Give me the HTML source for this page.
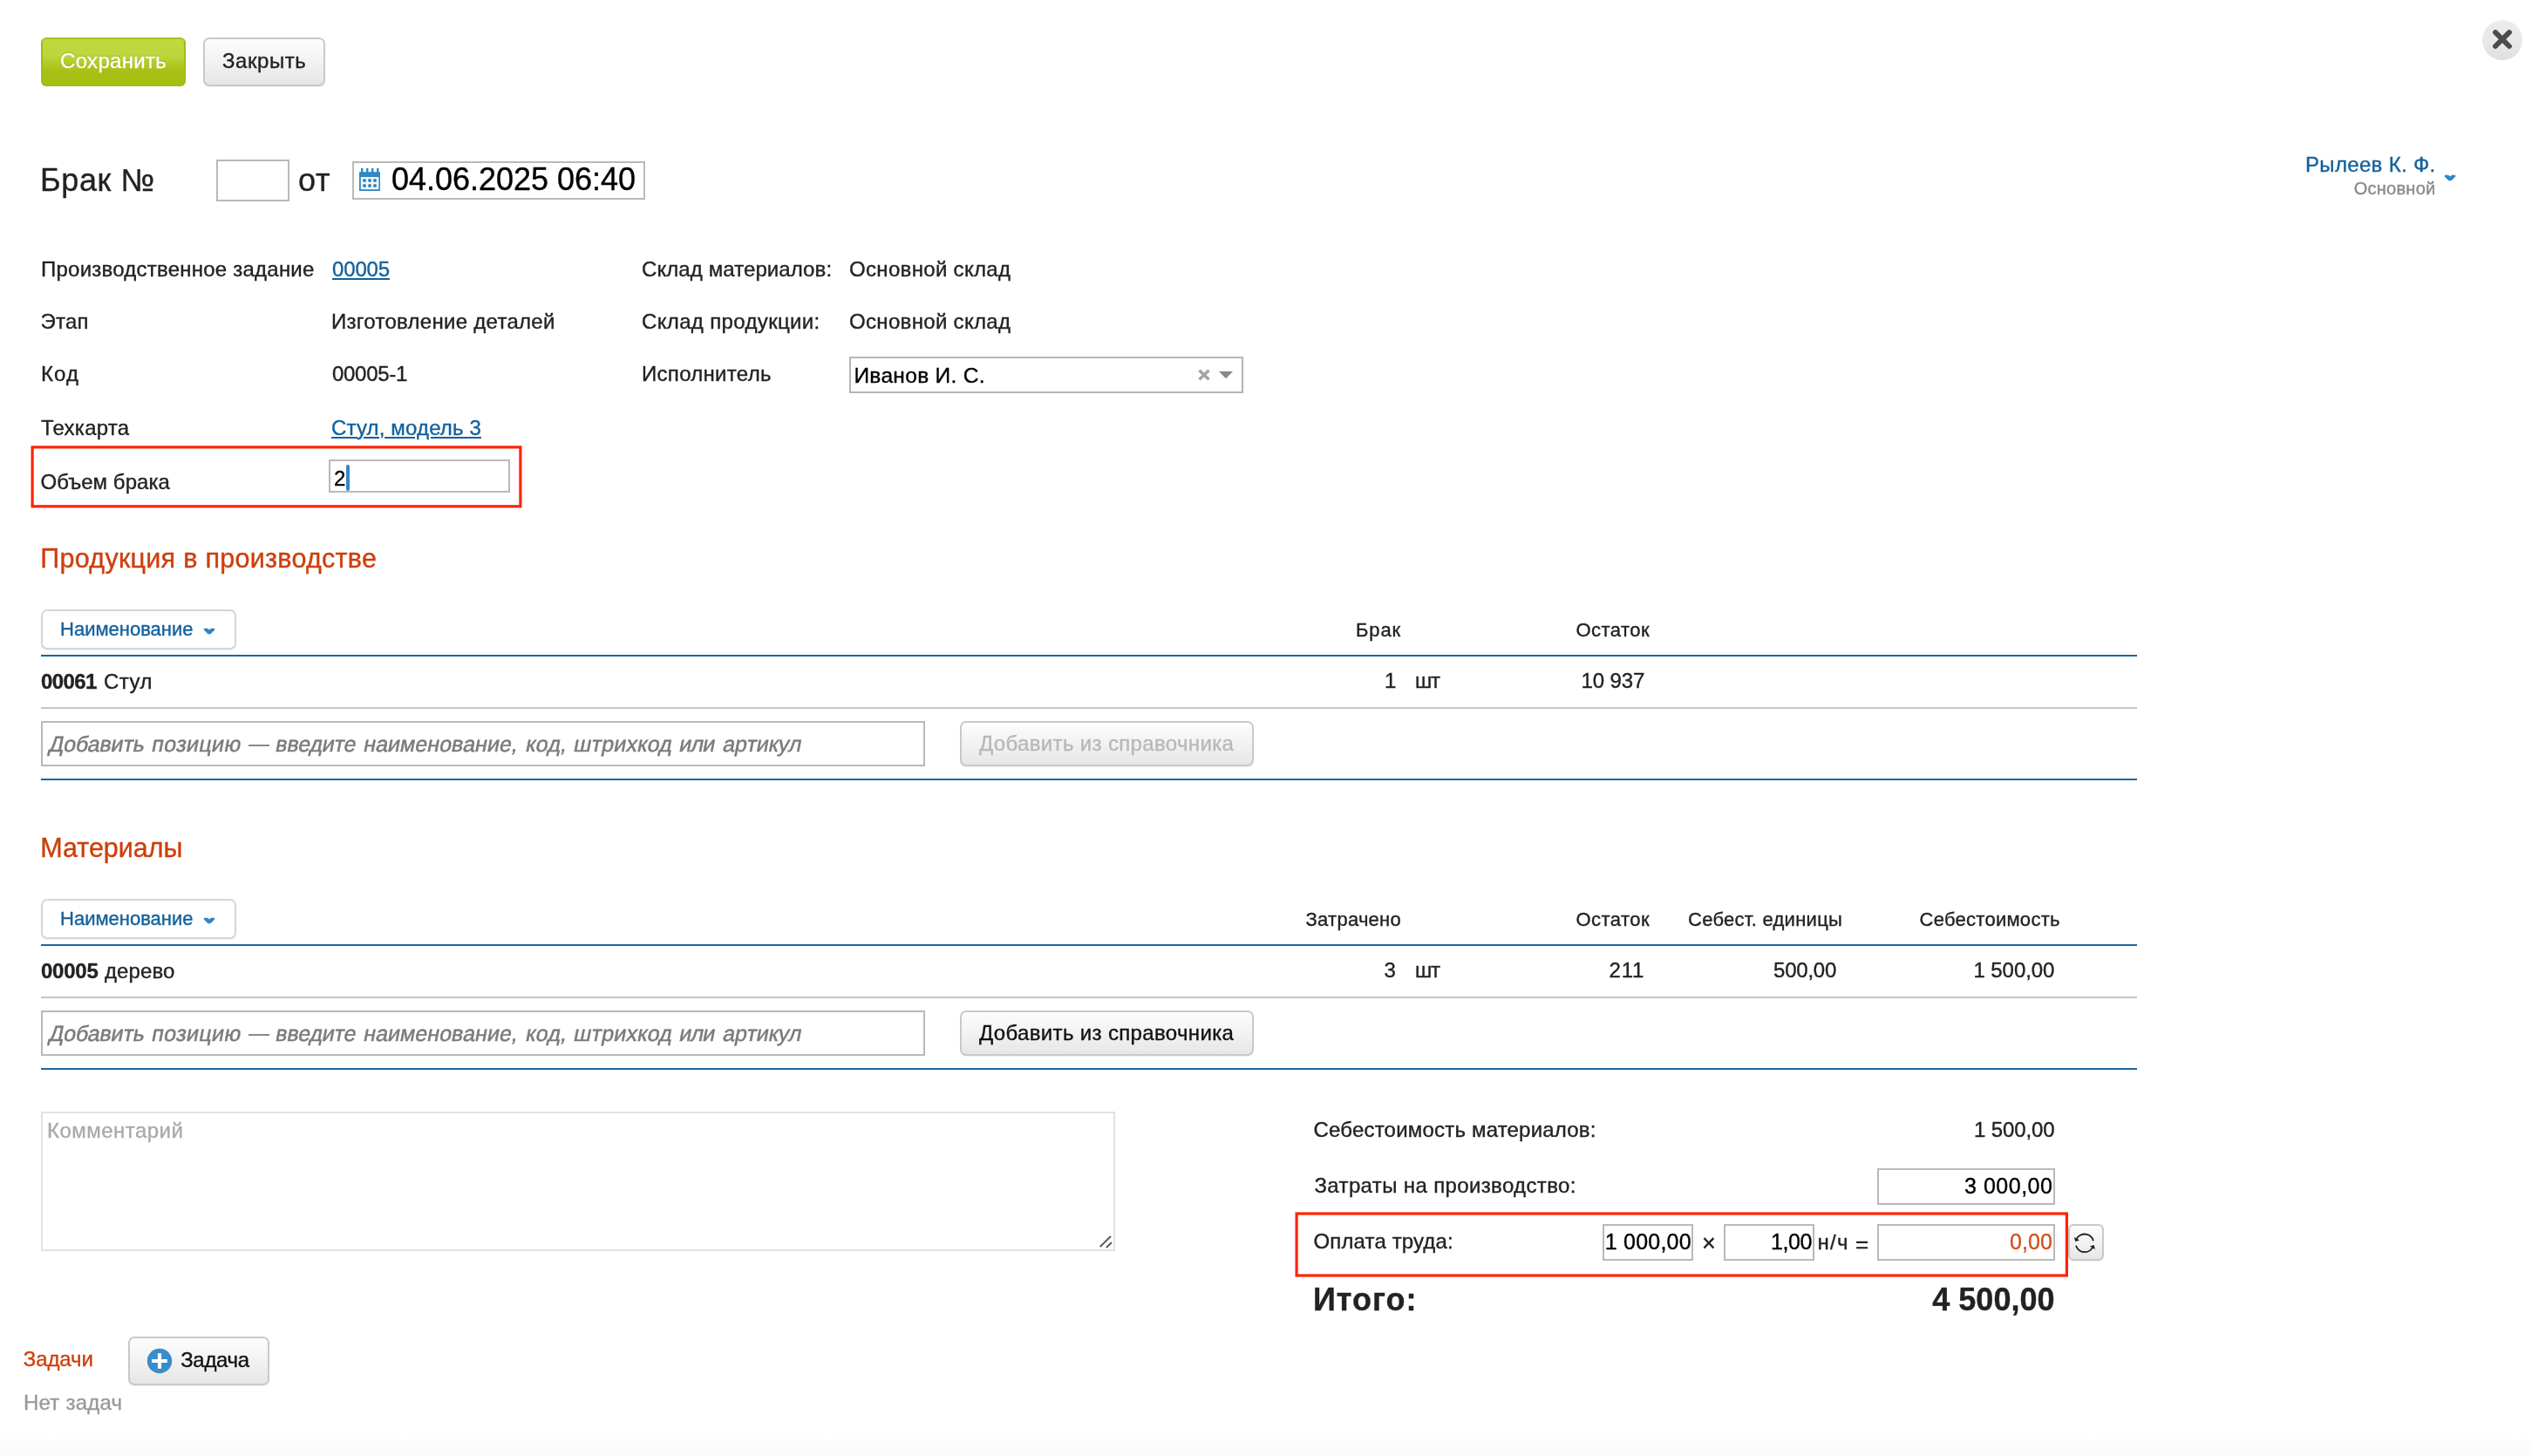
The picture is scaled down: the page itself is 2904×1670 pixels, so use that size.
<!DOCTYPE html>
<html lang="ru"><head><meta charset="utf-8"><title>Брак</title>
<style>
html,body{margin:0;padding:0;background:#fff;}
body{width:2904px;height:1670px;position:relative;overflow:hidden;font-family:"Liberation Sans",sans-serif;}
.t{position:absolute;white-space:nowrap;line-height:1;font-family:"Liberation Sans",sans-serif;-webkit-text-stroke:0.36px currentColor;}
#w{position:absolute;left:0;top:0;width:2904px;height:1670px;will-change:transform;}
.b{position:absolute;box-sizing:border-box;}
.foot{position:absolute;left:0;top:1646px;width:2904px;height:24px;background:linear-gradient(#fff,#fafafa);}
</style></head><body>
<div class="foot"></div>
<div id="w">
<div class="b" style="left:47px;top:43px;width:166px;height:56px;border-radius:6px;border:2px solid #a3bb12;border-top-color:#a9c31c;background:linear-gradient(#c0d840 0%,#bfd73f 33%,#b3cb29 52%,#a6bf12 73%,#a6bf12 100%);"></div>
<div class="b" style="left:233px;top:43px;width:140px;height:56px;border:2px solid #c9c9c9;border-radius:7px;background:linear-gradient(#fdfdfd,#f1f1f1 55%,#e6e6e6);box-shadow:0 1px 1px rgba(0,0,0,.06);"></div>
<div class="b" style="left:248px;top:183px;width:84px;height:48px;border:2px solid #b9b9b9;background:#fff;"></div>
<div class="b" style="left:404px;top:185px;width:336px;height:44px;border:2px solid #b9b9b9;background:#fff;"></div>
<div class="b" style="left:974px;top:409px;width:452px;height:42px;border:2px solid #b5b5b5;background:#fff;"></div>
<div class="b" style="left:377px;top:527px;width:208px;height:38px;border:2px solid #b9b9b9;background:#fff;"></div>
<div class="b" style="left:397.2px;top:533.2px;width:3.6999999999999886px;height:29.799999999999955px;background:#3587c5;border-radius:2px;"></div>
<div class="b" style="left:47px;top:699px;width:224px;height:45.5px;border:2px solid #d4d7d8;border-radius:7px;background:#fff;box-shadow:0 1px 1px rgba(0,0,0,.05);"></div>
<div class="b" style="left:47px;top:750.7px;width:2404px;height:2.199999999999932px;background:#1a679d;"></div>
<div class="b" style="left:47px;top:810.6px;width:2404px;height:2.0px;background:#c6c6c6;"></div>
<div class="b" style="left:47px;top:827px;width:1014px;height:52px;border:2px solid #b9b9b9;background:#fff;"></div>
<div class="b" style="left:1101px;top:827px;width:337px;height:52px;border:2px solid #c9c9c9;border-radius:7px;background:linear-gradient(#fdfdfd,#f1f1f1 55%,#e6e6e6);box-shadow:0 1px 1px rgba(0,0,0,.06);"></div>
<div class="b" style="left:47px;top:892.6px;width:2404px;height:2.199999999999932px;background:#1a679d;"></div>
<div class="b" style="left:47px;top:1031px;width:224px;height:45.5px;border:2px solid #d4d7d8;border-radius:7px;background:#fff;box-shadow:0 1px 1px rgba(0,0,0,.05);"></div>
<div class="b" style="left:47px;top:1082.7px;width:2404px;height:2.2000000000000455px;background:#1a679d;"></div>
<div class="b" style="left:47px;top:1142.6px;width:2404px;height:2.0px;background:#c6c6c6;"></div>
<div class="b" style="left:47px;top:1159px;width:1014px;height:52px;border:2px solid #b9b9b9;background:#fff;"></div>
<div class="b" style="left:1101px;top:1159px;width:337px;height:52px;border:2px solid #c9c9c9;border-radius:7px;background:linear-gradient(#fdfdfd,#f1f1f1 55%,#e6e6e6);box-shadow:0 1px 1px rgba(0,0,0,.06);"></div>
<div class="b" style="left:47px;top:1224.6px;width:2404px;height:2.2000000000000455px;background:#1a679d;"></div>
<div class="b" style="left:47px;top:1275px;width:1232px;height:159.5px;border:2px solid #e2e2e2;background:#fff;"></div>
<div class="b" style="left:2153px;top:1340px;width:204px;height:41.75px;border:2px solid #b9b9b9;background:#fff;"></div>
<div class="b" style="left:1838px;top:1404px;width:103.75px;height:41.5px;border:2px solid #b9b9b9;background:#fff;"></div>
<div class="b" style="left:1977px;top:1404px;width:103.75px;height:41.5px;border:2px solid #b9b9b9;background:#fff;"></div>
<div class="b" style="left:2153px;top:1404px;width:204px;height:41.5px;border:2px solid #b9b9b9;background:#fff;"></div>
<div class="b" style="left:2372px;top:1404.25px;width:40.5px;height:41.25px;border:2px solid #c9c9c9;border-radius:6px;background:linear-gradient(#fdfdfd,#f1f1f1 55%,#e6e6e6);box-shadow:0 1px 1px rgba(0,0,0,.06);"></div>
<div class="b" style="left:147.4px;top:1533px;width:162.1px;height:55.59999999999991px;border:2px solid #c9c9c9;border-radius:7px;background:linear-gradient(#fdfdfd,#f1f1f1 55%,#e6e6e6);box-shadow:0 1px 1px rgba(0,0,0,.06);"></div>

<!-- red annotation boxes -->
<svg class="b" style="left:0;top:0" width="2904" height="1670" viewBox="0 0 2904 1670" fill="none" stroke="#ff2203" stroke-width="3.2">
  <rect x="37.1" y="512.9" width="559.8" height="67.9"/>
  <rect x="1487.1" y="1392" width="883.3" height="71"/>
</svg>
<!-- close circle -->
<svg class="b" style="left:2844px;top:20px" width="52" height="52" viewBox="0 0 52 52">
  <defs><linearGradient id="cg" x1="0" y1="0" x2="0" y2="1"><stop offset="0" stop-color="#ebecec"/><stop offset="0.6" stop-color="#e7e8e9"/><stop offset="1" stop-color="#dddfe1"/></linearGradient></defs>
  <circle cx="26" cy="26" r="23" fill="url(#cg)"/>
  <path d="M18 17.1 L33.9 33 M33.9 17.1 L18 33" stroke="#4c4c4c" stroke-width="5.9" stroke-linecap="round"/>
</svg>
<!-- user caret -->
<svg class="b" style="left:2803.3px;top:200.3px" width="14" height="8" viewBox="0 0 14 8"><path d="M0.8 0.8 L5 0.8 L7 2.6 L9 0.8 L13.2 0.8 L13.2 2.5 L8.5 7.3 L5.5 7.3 L0.8 2.5 Z" fill="#2e86c5"/></svg>
<!-- calendar icon -->
<svg class="b" style="left:412px;top:192px" width="24" height="28" viewBox="0 0 24 28">
  <g fill="#2e87c7">
    <rect x="2" y="1" width="2.4" height="5"/><rect x="8" y="1" width="2.4" height="5"/><rect x="14" y="1" width="2.4" height="5"/><rect x="20" y="1" width="2.4" height="5"/>
    <rect x="0" y="5.2" width="24" height="21.8"/>
  </g>
  <rect x="1.8" y="11" width="20.6" height="14.2" fill="#f6f3f2"/>
  <g fill="#2e87c7">
    <circle cx="6" cy="15" r="2"/><circle cx="12" cy="15" r="2"/><circle cx="18" cy="15" r="2"/>
    <circle cx="6" cy="21" r="2"/><circle cx="12" cy="21" r="2"/><circle cx="18" cy="21" r="2"/>
  </g>
</svg>
<!-- select clear x + arrow -->
<svg class="b" style="left:1372px;top:421px" width="46" height="18" viewBox="0 0 46 18">
  <path d="M3.5 3.8 L14.5 14.2 M14.5 3.8 L3.5 14.2" stroke="#a3a3a3" stroke-width="3.6"/>
  <path d="M26 5 L42 5 L34 13.2 Z" fill="#888"/>
</svg>
<!-- dropdown carets in Наименование buttons -->
<svg class="b" style="left:233px;top:720px" width="14" height="8" viewBox="0 0 14 8"><path d="M0.8 0.8 L5 0.8 L7 2.6 L9 0.8 L13.2 0.8 L13.2 2.5 L8.5 7.3 L5.5 7.3 L0.8 2.5 Z" fill="#2e86c5"/></svg>
<svg class="b" style="left:233px;top:1052px" width="14" height="8" viewBox="0 0 14 8"><path d="M0.8 0.8 L5 0.8 L7 2.6 L9 0.8 L13.2 0.8 L13.2 2.5 L8.5 7.3 L5.5 7.3 L0.8 2.5 Z" fill="#2e86c5"/></svg>
<!-- textarea resize grip -->
<svg class="b" style="left:1258px;top:1414px" width="20" height="20" viewBox="0 0 20 20"><path d="M3.7 16 L16 4 M10.9 17 L17 11" stroke="#5a5a5a" stroke-width="2"/></svg>
<!-- refresh icon -->
<svg class="b" style="left:2376px;top:1411px" width="30" height="30" viewBox="0 0 30 30">
  <g fill="none" stroke="#1c1c1c" stroke-width="1.8">
    <path d="M5.15 11.48 A10.3 10.3 0 0 1 24.88 12.26"/>
    <path d="M5.05 17.8 A10.3 10.3 0 0 0 24.63 18.19"/>
  </g>
  <g fill="#1c1c1c">
    <path d="M2.9 7.9 L4.2 12.9 L9 11.6 Z"/>
    <path d="M26.9 21.9 L25.6 16.9 L21 18.5 Z"/>
  </g>
</svg>
<!-- plus circle -->
<svg class="b" style="left:168px;top:1546px" width="30" height="30" viewBox="0 0 30 30">
  <circle cx="15" cy="15" r="14.2" fill="#3a8ccb"/>
  <path d="M15 6.2 V23.8 M6.2 15 H23.8" stroke="#fff" stroke-width="4.2"/>
</svg>

<span class="t" style="left:69.10px;top:58.08px;font-size:24px;color:#fff;letter-spacing:0.293px;text-shadow:0 -1px 1px rgba(110,130,0,.55);">Сохранить</span>
<span class="t" style="left:255.10px;top:57.88px;font-size:24px;color:#222;letter-spacing:0.528px;">Закрыть</span>
<span class="t" style="left:46.00px;top:189.03px;font-size:36px;color:#222;letter-spacing:0.616px;">Брак №</span>
<span class="t" style="left:342.00px;top:189.03px;font-size:36px;color:#222;letter-spacing:0.770px;">от</span>
<span class="t" style="left:449.00px;top:187.53px;font-size:36px;color:#000;letter-spacing:-0.016px;">04.06.2025 06:40</span>
<span class="t" style="left:2644.00px;top:177.08px;font-size:24px;color:#13619b;letter-spacing:0.324px;">Рылеев К. Ф.</span>
<span class="t" style="left:2699.80px;top:205.57px;font-size:20px;color:#8a8a8a;letter-spacing:0.240px;">Основной</span>
<span class="t" style="left:47.00px;top:296.68px;font-size:24px;color:#222;letter-spacing:0.230px;">Производственное задание</span>
<span class="t" style="left:381.00px;top:296.68px;font-size:24px;color:#13619b;letter-spacing:-0.160px;text-decoration:underline;text-decoration-thickness:2px;text-underline-offset:2px;">00005</span>
<span class="t" style="left:736.00px;top:296.68px;font-size:24px;color:#222;letter-spacing:0.088px;">Склад материалов:</span>
<span class="t" style="left:974.00px;top:296.68px;font-size:24px;color:#222;letter-spacing:0.322px;">Основной склад</span>
<span class="t" style="left:46.50px;top:356.68px;font-size:24px;color:#222;letter-spacing:0.227px;">Этап</span>
<span class="t" style="left:380.00px;top:356.68px;font-size:24px;color:#222;letter-spacing:0.286px;">Изготовление деталей</span>
<span class="t" style="left:736.00px;top:356.68px;font-size:24px;color:#222;letter-spacing:0.350px;">Склад продукции:</span>
<span class="t" style="left:974.00px;top:356.68px;font-size:24px;color:#222;letter-spacing:0.322px;">Основной склад</span>
<span class="t" style="left:47.00px;top:416.68px;font-size:24px;color:#222;letter-spacing:1.100px;">Код</span>
<span class="t" style="left:381.00px;top:416.68px;font-size:24px;color:#222;letter-spacing:-0.288px;">00005-1</span>
<span class="t" style="left:736.00px;top:416.68px;font-size:24px;color:#222;letter-spacing:0.299px;">Исполнитель</span>
<span class="t" style="left:979.40px;top:418.56px;font-size:24.5px;color:#000;letter-spacing:0.321px;">Иванов И. С.</span>
<span class="t" style="left:47.00px;top:478.68px;font-size:24px;color:#222;letter-spacing:0.243px;">Техкарта</span>
<span class="t" style="left:380.00px;top:478.68px;font-size:24px;color:#13619b;letter-spacing:0.157px;text-decoration:underline;text-decoration-thickness:2px;text-underline-offset:2px;">Стул, модель 3</span>
<span class="t" style="left:46.50px;top:540.68px;font-size:24px;color:#222;letter-spacing:0.040px;">Объем брака</span>
<span class="t" style="left:383.00px;top:536.68px;font-size:24px;color:#000;">2</span>
<span class="t" style="left:46.30px;top:625.18px;font-size:30.5px;color:#cc3f0c;letter-spacing:0.281px;">Продукция в производстве</span>
<span class="t" style="left:69.10px;top:710.78px;font-size:22px;color:#13619b;letter-spacing:-0.016px;">Наименование</span>
<span class="t" style="left:1555.00px;top:712.18px;font-size:22px;color:#222;letter-spacing:0.864px;">Брак</span>
<span class="t" style="left:1807.50px;top:712.18px;font-size:22px;color:#222;letter-spacing:0.457px;">Остаток</span>
<span class="t" style="left:47.00px;top:769.68px;font-size:24px;color:#222;letter-spacing:-0.598px;font-weight:bold;">00061</span>
<span class="t" style="left:119.00px;top:769.68px;font-size:24px;color:#222;letter-spacing:0.478px;">Стул</span>
<span class="t" style="left:1588.00px;top:768.88px;font-size:24px;color:#222;">1</span>
<span class="t" style="left:1623.00px;top:768.88px;font-size:24px;color:#222;letter-spacing:-1.254px;">шт</span>
<span class="t" style="left:1813.50px;top:768.88px;font-size:24px;color:#222;letter-spacing:-0.112px;">10 937</span>
<span class="t" style="left:55.40px;top:840.84px;font-size:25px;color:#7b7b7b;letter-spacing:-0.146px;transform:skewX(-11deg);transform-origin:0 21.16px;-webkit-text-stroke:0.5px currentColor;">Добавить</span>
<span class="t" style="left:173.10px;top:840.84px;font-size:25px;color:#7b7b7b;letter-spacing:0.385px;transform:skewX(-11deg);transform-origin:0 21.16px;-webkit-text-stroke:0.5px currentColor;">позицию</span>
<span class="t" style="left:284.30px;top:842.19px;font-size:23.4px;color:#7b7b7b;transform:skewX(-11deg);transform-origin:0 19.81px;-webkit-text-stroke:0.5px currentColor;">—</span>
<span class="t" style="left:314.70px;top:840.84px;font-size:25px;color:#7b7b7b;letter-spacing:-0.176px;transform:skewX(-11deg);transform-origin:0 21.16px;-webkit-text-stroke:0.5px currentColor;">введите</span>
<span class="t" style="left:415.90px;top:840.84px;font-size:25px;color:#7b7b7b;letter-spacing:0.050px;transform:skewX(-11deg);transform-origin:0 21.16px;-webkit-text-stroke:0.5px currentColor;">наименование,</span>
<span class="t" style="left:601.50px;top:840.84px;font-size:25px;color:#7b7b7b;letter-spacing:0.293px;transform:skewX(-11deg);transform-origin:0 21.16px;-webkit-text-stroke:0.5px currentColor;">код,</span>
<span class="t" style="left:657.40px;top:840.84px;font-size:25px;color:#7b7b7b;letter-spacing:0.219px;transform:skewX(-11deg);transform-origin:0 21.16px;-webkit-text-stroke:0.5px currentColor;">штрихкод</span>
<span class="t" style="left:778.20px;top:840.84px;font-size:25px;color:#7b7b7b;letter-spacing:-0.826px;transform:skewX(-11deg);transform-origin:0 21.16px;-webkit-text-stroke:0.5px currentColor;">или</span>
<span class="t" style="left:827.50px;top:840.84px;font-size:25px;color:#7b7b7b;letter-spacing:-0.070px;transform:skewX(-11deg);transform-origin:0 21.16px;-webkit-text-stroke:0.5px currentColor;">артикул</span>
<span class="t" style="left:1123.00px;top:840.68px;font-size:24px;color:#b8b8b8;letter-spacing:0.341px;">Добавить из справочника</span>
<span class="t" style="left:46.30px;top:957.18px;font-size:30.5px;color:#cc3f0c;letter-spacing:-0.024px;">Материалы</span>
<span class="t" style="left:69.10px;top:1042.78px;font-size:22px;color:#13619b;letter-spacing:-0.016px;">Наименование</span>
<span class="t" style="left:1497.50px;top:1044.18px;font-size:22px;color:#222;letter-spacing:0.256px;">Затрачено</span>
<span class="t" style="left:1807.50px;top:1044.18px;font-size:22px;color:#222;letter-spacing:0.457px;">Остаток</span>
<span class="t" style="left:1936.00px;top:1044.18px;font-size:22px;color:#222;letter-spacing:0.268px;">Себест. единицы</span>
<span class="t" style="left:2201.50px;top:1044.18px;font-size:22px;color:#222;letter-spacing:0.270px;">Себестоимость</span>
<span class="t" style="left:47.00px;top:1101.68px;font-size:24px;color:#222;letter-spacing:-0.223px;font-weight:bold;">00005</span>
<span class="t" style="left:120.00px;top:1101.68px;font-size:24px;color:#222;letter-spacing:0.095px;">дерево</span>
<span class="t" style="left:1587.50px;top:1100.98px;font-size:24px;color:#222;">3</span>
<span class="t" style="left:1623.00px;top:1100.98px;font-size:24px;color:#222;letter-spacing:-1.254px;">шт</span>
<span class="t" style="left:1845.50px;top:1100.98px;font-size:24px;color:#222;letter-spacing:0.793px;">211</span>
<span class="t" style="left:2034.00px;top:1100.98px;font-size:24px;color:#222;letter-spacing:-0.212px;">500,00</span>
<span class="t" style="left:2263.50px;top:1100.98px;font-size:24px;color:#222;letter-spacing:-0.082px;">1 500,00</span>
<span class="t" style="left:55.40px;top:1172.84px;font-size:25px;color:#7b7b7b;letter-spacing:-0.146px;transform:skewX(-11deg);transform-origin:0 21.16px;-webkit-text-stroke:0.5px currentColor;">Добавить</span>
<span class="t" style="left:173.10px;top:1172.84px;font-size:25px;color:#7b7b7b;letter-spacing:0.385px;transform:skewX(-11deg);transform-origin:0 21.16px;-webkit-text-stroke:0.5px currentColor;">позицию</span>
<span class="t" style="left:284.30px;top:1174.19px;font-size:23.4px;color:#7b7b7b;transform:skewX(-11deg);transform-origin:0 19.81px;-webkit-text-stroke:0.5px currentColor;">—</span>
<span class="t" style="left:314.70px;top:1172.84px;font-size:25px;color:#7b7b7b;letter-spacing:-0.176px;transform:skewX(-11deg);transform-origin:0 21.16px;-webkit-text-stroke:0.5px currentColor;">введите</span>
<span class="t" style="left:415.90px;top:1172.84px;font-size:25px;color:#7b7b7b;letter-spacing:0.050px;transform:skewX(-11deg);transform-origin:0 21.16px;-webkit-text-stroke:0.5px currentColor;">наименование,</span>
<span class="t" style="left:601.50px;top:1172.84px;font-size:25px;color:#7b7b7b;letter-spacing:0.293px;transform:skewX(-11deg);transform-origin:0 21.16px;-webkit-text-stroke:0.5px currentColor;">код,</span>
<span class="t" style="left:657.40px;top:1172.84px;font-size:25px;color:#7b7b7b;letter-spacing:0.219px;transform:skewX(-11deg);transform-origin:0 21.16px;-webkit-text-stroke:0.5px currentColor;">штрихкод</span>
<span class="t" style="left:778.20px;top:1172.84px;font-size:25px;color:#7b7b7b;letter-spacing:-0.826px;transform:skewX(-11deg);transform-origin:0 21.16px;-webkit-text-stroke:0.5px currentColor;">или</span>
<span class="t" style="left:827.50px;top:1172.84px;font-size:25px;color:#7b7b7b;letter-spacing:-0.070px;transform:skewX(-11deg);transform-origin:0 21.16px;-webkit-text-stroke:0.5px currentColor;">артикул</span>
<span class="t" style="left:1123.00px;top:1172.68px;font-size:24px;color:#111;letter-spacing:0.341px;">Добавить из справочника</span>
<span class="t" style="left:54.00px;top:1284.68px;font-size:24px;color:#a9a9a9;letter-spacing:0.475px;">Комментарий</span>
<span class="t" style="left:1506.50px;top:1284.18px;font-size:24px;color:#222;letter-spacing:0.194px;">Себестоимость материалов:</span>
<span class="t" style="left:2264.00px;top:1284.18px;font-size:24px;color:#222;letter-spacing:-0.118px;">1 500,00</span>
<span class="t" style="left:1507.50px;top:1348.43px;font-size:24px;color:#222;letter-spacing:0.364px;">Затраты на производство:</span>
<span class="t" style="left:2253.00px;top:1348.34px;font-size:25px;color:#000;letter-spacing:0.513px;">3 000,00</span>
<span class="t" style="left:1506.50px;top:1412.18px;font-size:24px;color:#222;letter-spacing:0.137px;">Оплата труда:</span>
<span class="t" style="left:1840.75px;top:1412.34px;font-size:25px;color:#000;letter-spacing:0.227px;">1 000,00</span>
<span class="t" style="left:1952.00px;top:1413.14px;font-size:27px;color:#222;">×</span>
<span class="t" style="left:2031.00px;top:1412.34px;font-size:25px;color:#000;letter-spacing:-0.418px;">1,00</span>
<span class="t" style="left:2084.50px;top:1412.68px;font-size:24px;color:#222;letter-spacing:1.289px;">н/ч</span>
<span class="t" style="left:2128.00px;top:1413.99px;font-size:26px;color:#222;">=</span>
<span class="t" style="left:2305.00px;top:1412.34px;font-size:25px;color:#d2511f;letter-spacing:0.082px;">0,00</span>
<span class="t" style="left:1506.00px;top:1472.53px;font-size:36px;color:#222;letter-spacing:0.994px;font-weight:bold;">Итого:</span>
<span class="t" style="left:2216.25px;top:1472.53px;font-size:36px;color:#222;letter-spacing:0.020px;font-weight:bold;">4 500,00</span>
<span class="t" style="left:26.80px;top:1547.48px;font-size:24px;color:#cc3f0c;letter-spacing:-0.114px;">Задачи</span>
<span class="t" style="left:207.20px;top:1548.08px;font-size:24px;color:#111;letter-spacing:-0.314px;">Задача</span>
<span class="t" style="left:27.00px;top:1596.68px;font-size:24px;color:#999;letter-spacing:0.223px;">Нет задач</span>
</div></body></html>
